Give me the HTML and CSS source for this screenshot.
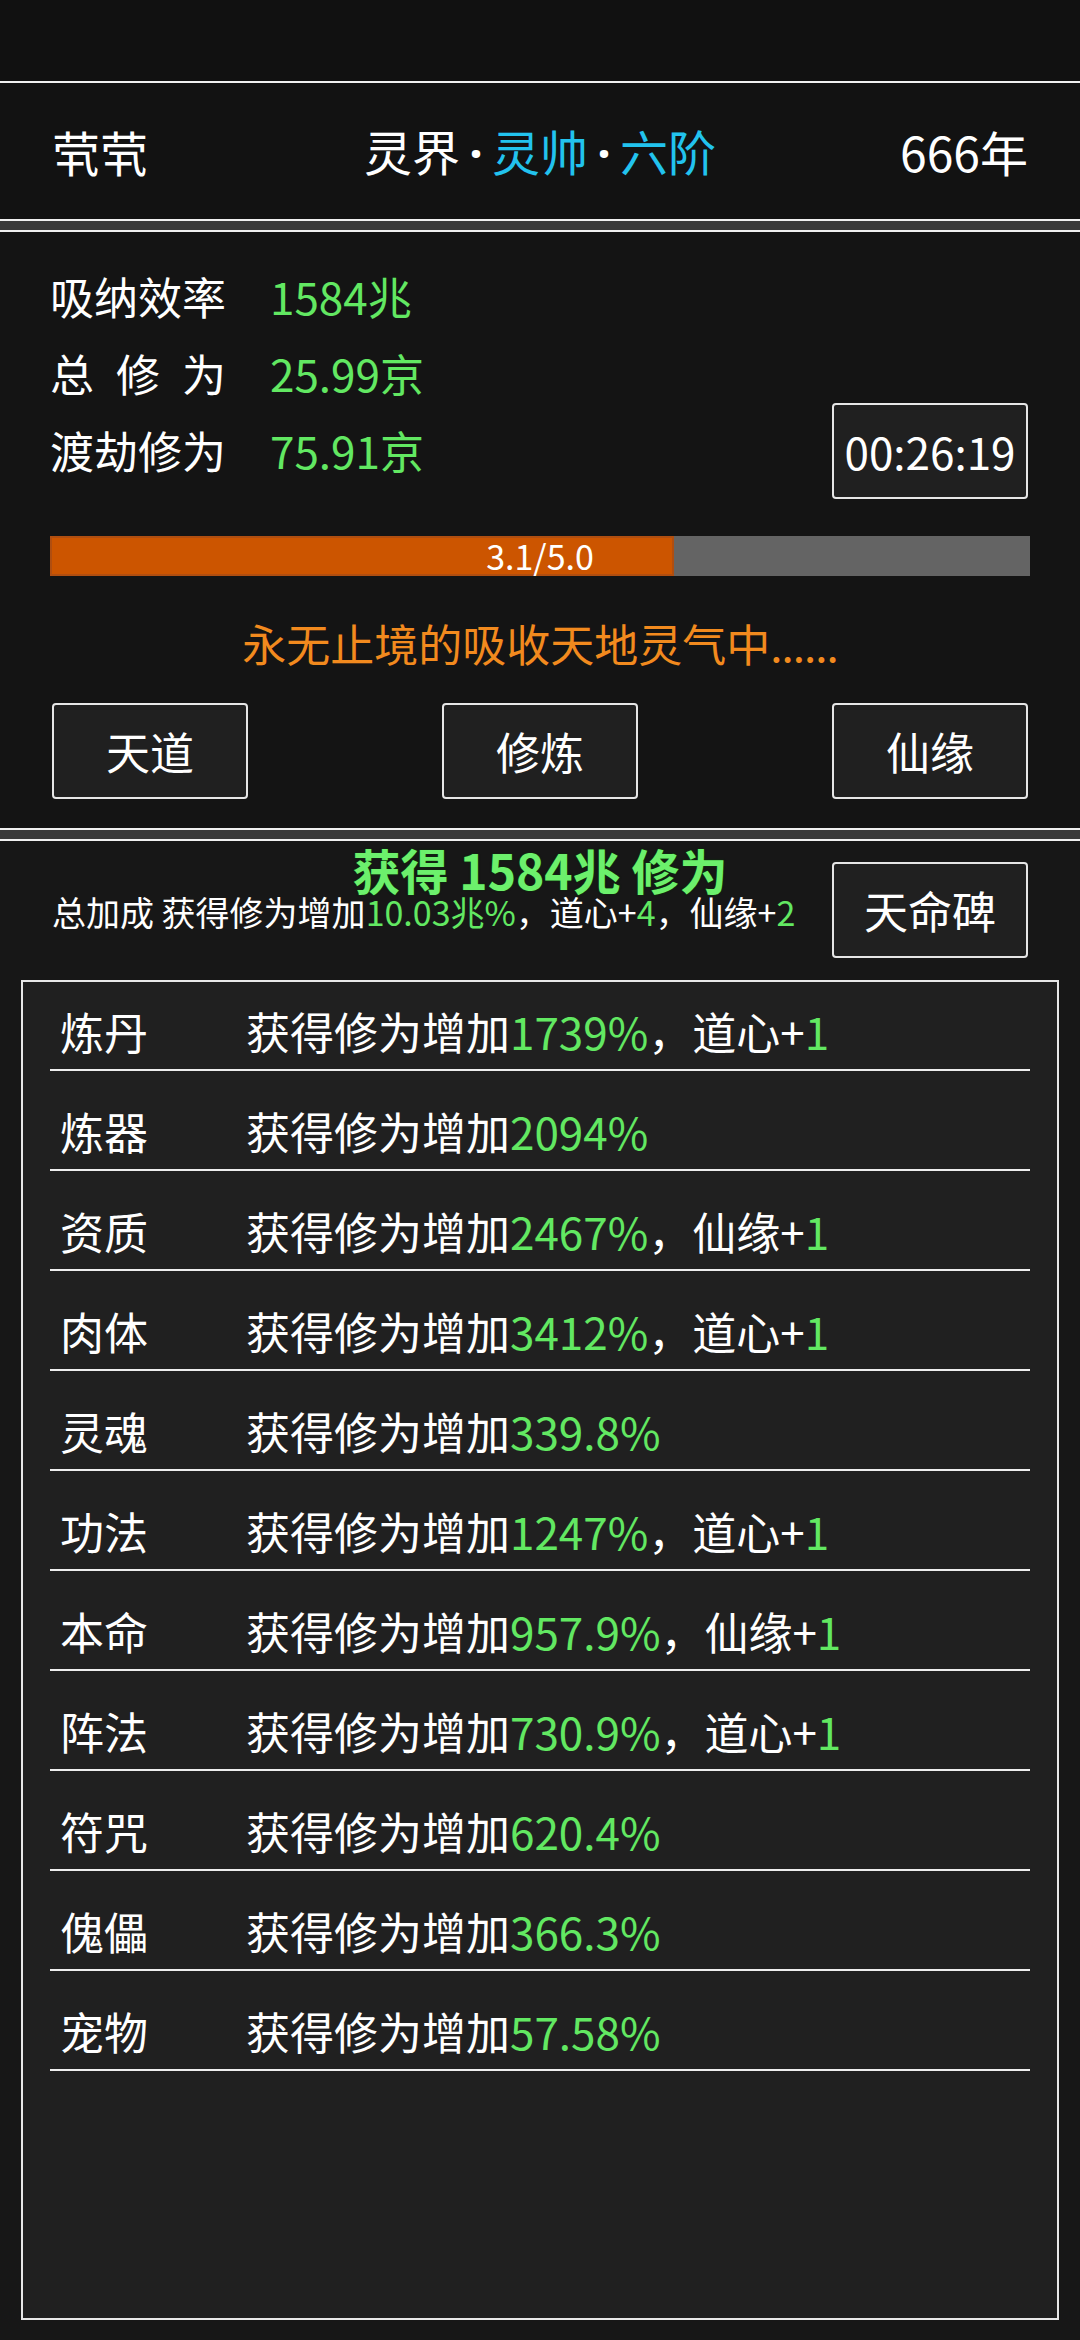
FILE: index.html
```html
<!DOCTYPE html>
<html lang="zh-CN">
<head>
<meta charset="utf-8">
<title>修炼</title>
<link rel="stylesheet" href="styles.css">
</head>
<body>
<div class="statusbar"></div>

<header class="topbar">
  <span class="name">茕茕</span>
  <span class="realm">灵界<span class="dot">·</span><span class="cyan">灵帅</span><span class="dot">·</span><span class="cyan">六阶</span></span>
  <span class="year">666年</span>
</header>

<div class="band"></div>

<section class="stats">
  <div class="stats-top">
    <div class="stat-list">
      <div class="stat-row"><span class="stat-label">吸纳效率</span><span class="green">1584兆</span></div>
      <div class="stat-row"><span class="stat-label">总 修 为</span><span class="green">25.99京</span></div>
      <div class="stat-row"><span class="stat-label">渡劫修为</span><span class="green">75.91京</span></div>
    </div>
    <div class="timer">00:26:19</div>
  </div>

  <div class="bar">
    <div class="bar-fill" style="width: 63.7%"></div>
    <div class="bar-text">3.1/5.0</div>
  </div>

  <p class="message">永无止境的吸收天地灵气中<span class="dots">......</span></p>

  <div class="actions">
    <div class="btn">天道</div>
    <div class="btn">修炼</div>
    <div class="btn">仙缘</div>
  </div>
</section>

<div class="band"></div>

<section class="main">
  <div class="main-head">
    <h1 class="gain">获得 1584兆 修为</h1>
    <p class="bonus">总加成 获得修为增加<span class="green">10.03兆%</span>，道心+<span class="green">4</span>，仙缘+<span class="green">2</span></p>
    <div class="btn btn-stele">天命碑</div>
  </div>

  <div class="list">
    <div class="item"><span class="item-name">炼丹</span><span>获得修为增加<span class="green">1739%</span>，道心+<span class="green">1</span></span></div>
    <div class="item"><span class="item-name">炼器</span><span>获得修为增加<span class="green">2094%</span></span></div>
    <div class="item"><span class="item-name">资质</span><span>获得修为增加<span class="green">2467%</span>，仙缘+<span class="green">1</span></span></div>
    <div class="item"><span class="item-name">肉体</span><span>获得修为增加<span class="green">3412%</span>，道心+<span class="green">1</span></span></div>
    <div class="item"><span class="item-name">灵魂</span><span>获得修为增加<span class="green">339.8%</span></span></div>
    <div class="item"><span class="item-name">功法</span><span>获得修为增加<span class="green">1247%</span>，道心+<span class="green">1</span></span></div>
    <div class="item"><span class="item-name">本命</span><span>获得修为增加<span class="green">957.9%</span>，仙缘+<span class="green">1</span></span></div>
    <div class="item"><span class="item-name">阵法</span><span>获得修为增加<span class="green">730.9%</span>，道心+<span class="green">1</span></span></div>
    <div class="item"><span class="item-name">符咒</span><span>获得修为增加<span class="green">620.4%</span></span></div>
    <div class="item"><span class="item-name">傀儡</span><span>获得修为增加<span class="green">366.3%</span></span></div>
    <div class="item"><span class="item-name">宠物</span><span>获得修为增加<span class="green">57.58%</span></span></div>
  </div>
</section>
</body>
</html>
```

FILE: styles.css
```css
* {
  box-sizing: border-box;
  margin: 0;
  padding: 0;
}

html,
body {
  background: #111111;
}

body {
  width: 1080px;
  height: 2340px;
  display: flex;
  flex-direction: column;
  font-family: "Noto Sans CJK SC", "Noto Sans", sans-serif;
  color: #ffffff;
  overflow: hidden;
}

.green {
  color: #62e862;
}

.cyan {
  color: #22c3ee;
}

.statusbar {
  flex: none;
  height: 81px;
  background: #111111;
}

.topbar {
  flex: none;
  height: 140px;
  border-top: 2px solid #f0f0f0;
  border-bottom: 2px solid #f0f0f0;
  background: #121212;
  display: grid;
  grid-template-columns: 1fr auto 1fr;
  align-items: center;
  padding: 0 52px;
  font-size: 48px;
  line-height: 1;
}

.realm .dot {
  display: inline-block;
  width: 32px;
  text-align: center;
  font-family: "Noto Sans", sans-serif;
  font-weight: 700;
  color: #ffffff;
}

.year {
  justify-self: end;
}

.band {
  flex: none;
  height: 9px;
  background: #3a3a3a;
}

/* stats panel */
.stats {
  flex: none;
  border-top: 2px solid #f0f0f0;
  border-bottom: 2px solid #f0f0f0;
  background: #141414;
  padding: 26px 50px 29px;
}

.stats-top {
  display: flex;
  justify-content: space-between;
  align-items: flex-end;
}

.stat-list {
  padding-bottom: 10px;
}

.stat-row {
  height: 77px;
  line-height: 77px;
  font-size: 44px;
  white-space: nowrap;
}

.stat-label {
  display: inline-block;
  width: 176px;
  margin-right: 44px;
  text-align: justify;
  text-align-last: justify;
}

.timer {
  width: 196px;
  height: 96px;
  margin-right: 2px;
  border: 2px solid #e6e6e6;
  border-radius: 4px;
  background: #202020;
  display: flex;
  align-items: center;
  justify-content: center;
  font-size: 44px;
}

.bar {
  margin-top: 37px;
  height: 40px;
  background: #646464;
  display: grid;
}

.bar-fill,
.bar-text {
  grid-area: 1 / 1;
}

.bar-fill {
  height: 40px;
  background: #cc5500;
  box-shadow: inset 0 0 0 2px #b04e10;
}

.bar-text {
  justify-self: center;
  font-size: 34px;
  line-height: 40px;
  color: #ffffff;
}

.message {
  margin-top: 37px;
  height: 60px;
  line-height: 60px;
  text-align: center;
  font-size: 44px;
  color: #f28a1e;
}

.message .dots {
  letter-spacing: -1px;
}

.actions {
  margin-top: 30px;
  display: flex;
  justify-content: space-between;
  padding: 0 2px;
}

.btn {
  width: 196px;
  height: 96px;
  border: 2px solid #e6e6e6;
  border-radius: 4px;
  background: #202020;
  display: flex;
  align-items: center;
  justify-content: center;
  font-size: 44px;
  color: #ffffff;
}

/* main panel */
.main {
  flex: 1;
  display: flex;
  flex-direction: column;
  border-top: 2px solid #f0f0f0;
  background: #171717;
  padding: 0 21px 20px;
}

.main-head {
  margin: 0 31px;
  display: grid;
  grid-template-columns: 1fr auto;
  grid-template-rows: 52px 38px 1fr;
}

.gain {
  grid-column: 1 / -1;
  grid-row: 1;
  text-align: center;
  font-size: 48px;
  font-weight: 700;
  line-height: 56px;
  color: #6cf06c;
  text-shadow: 0 0 2px #0c3a0c, 0 0 1px #0c3a0c;
}

.bonus {
  grid-column: 1;
  grid-row: 2;
  align-self: center;
  font-size: 34px;
  line-height: 38px;
  white-space: nowrap;
}

.btn-stele {
  grid-column: 2;
  grid-row: 1 / 4;
  margin-top: 21px;
}

.list {
  flex: 1;
  margin-top: 22px;
  border: 2px solid #e8e8e8;
  background: #202020;
  padding: 11px 27px 0;
}

.item {
  height: 78px;
  margin-bottom: 22px;
  border-bottom: 2px solid #eeeeee;
  display: flex;
  align-items: center;
  padding-left: 10px;
  font-size: 44px;
  white-space: nowrap;
}

.item-name {
  width: 186px;
  flex: none;
}
```
